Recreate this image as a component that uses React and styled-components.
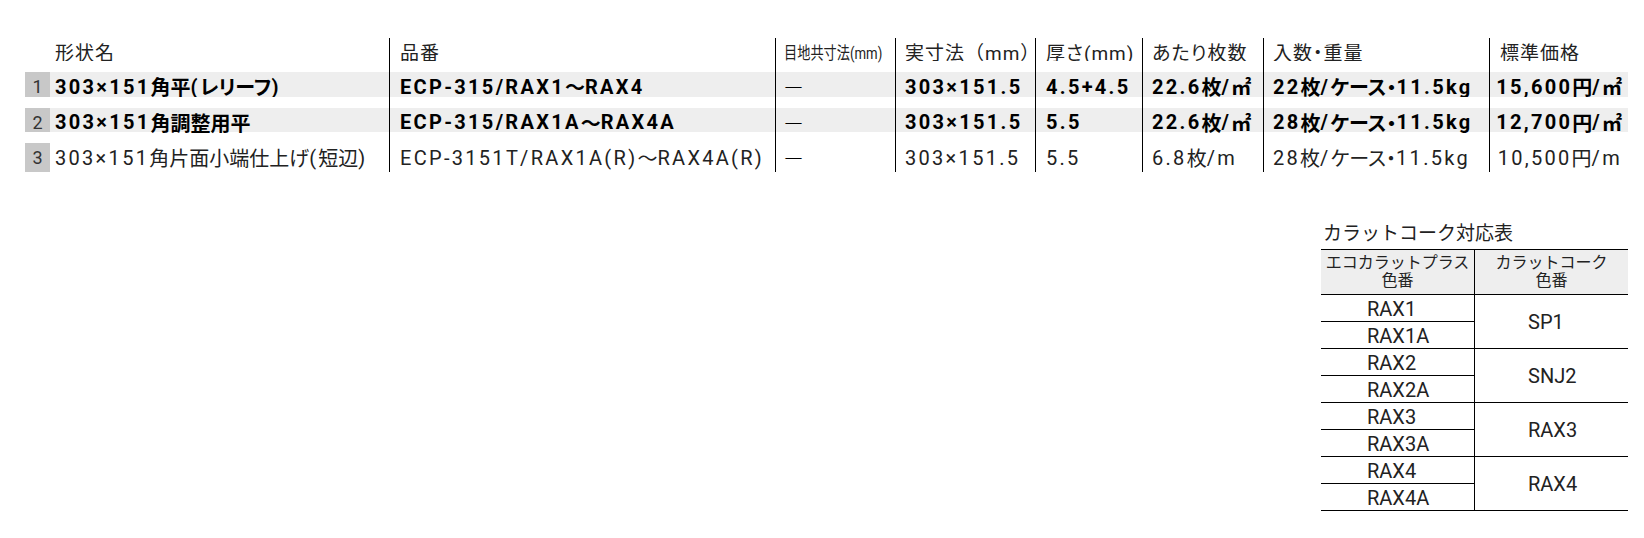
import React from 'react';
import styled, { createGlobalStyle } from 'styled-components';

const GlobalStyle = createGlobalStyle`
    html, body {
        margin: 0;
        padding: 0;
        background: #fff;
    }
    body {
        font-family: Roboto, "Noto Sans CJK JP", sans-serif;
        color: #111;
    }
`;

const COLUMNS = '25px 339px 386px 120px 140px 107px 121px 226px 139px';
const CJK = /([\u2015\u3000-\u30ff\u3300-\u33ff\u3400-\u9fff\uff00-\uffef]+)/;

const headers = [
    { label: '形状名', inset: 5 },
    { label: '品番', inset: 10 },
    { label: '目地共寸法(mm)', inset: 8, narrow: true },
    { label: '実寸法（mm）', inset: 9, full: true },
    { label: '厚さ(mm)', inset: 10 },
    { label: 'あたり枚数', inset: 9 },
    { label: '入数・重量', inset: 9 },
    { label: '標準価格', inset: 10 },
];

const rows = [
    {
        no: 1,
        bold: true,
        shaded: true,
        cells: ['303×151角平(レリーフ)', 'ECP-315/RAX1～RAX4', null, '303×151.5', '4.5+4.5', '22.6枚/㎡', '22枚/ケース・11.5kg', '15,600円/㎡'],
    },
    {
        no: 2,
        bold: true,
        shaded: true,
        cells: ['303×151角調整用平', 'ECP-315/RAX1A～RAX4A', null, '303×151.5', '5.5', '22.6枚/㎡', '28枚/ケース・11.5kg', '12,700円/㎡'],
    },
    {
        no: 3,
        bold: false,
        shaded: false,
        cells: ['303×151角片面小端仕上げ(短辺)', 'ECP-3151T/RAX1A(R)～RAX4A(R)', null, '303×151.5', '5.5', '6.8枚/m', '28枚/ケース・11.5kg', '10,500円/m'],
    },
];

const groups = [
    { codes: ['RAX1', 'RAX1A'], match: 'SP1' },
    { codes: ['RAX2', 'RAX2A'], match: 'SNJ2' },
    { codes: ['RAX3', 'RAX3A'], match: 'RAX3' },
    { codes: ['RAX4', 'RAX4A'], match: 'RAX4' },
];

// latin runs keep the wide tracking, japanese runs are set tight
const Mixed = ({ text }) =>
    text.split(CJK).map((part, i) => (i % 2 ? <Jp key={i}>{part}</Jp> : part));

const App = () => {
    return (
        <Page>
            <GlobalStyle />
            <SpecTable>
                <HeadRow>
                    <Blank />
                    {headers.map((h, i) => (
                        <HeadCell key={h.label} $line={i > 0} $inset={h.inset} $full={h.full}>
                            {h.narrow ? <Narrow>{h.label}</Narrow> : h.label}
                        </HeadCell>
                    ))}
                </HeadRow>
                {rows.map((row) => (
                    <DataRow key={row.no} $shaded={row.shaded} $bold={row.bold}>
                        <Badge>{row.no}</Badge>
                        {row.cells.map((text, i) => (
                            <Cell
                                key={i}
                                $line={i > 0}
                                $inset={headers[i].inset}
                                $right={i === row.cells.length - 1}
                            >
                                {text === null ? <Dash>―</Dash> : <Mixed text={text} />}
                            </Cell>
                        ))}
                    </DataRow>
                ))}
            </SpecTable>

            <MatchBlock>
                <MatchTitle>カラットコーク対応表</MatchTitle>
                <MatchTable>
                    <MatchHead>
                        <MatchHeadCell>
                            エコカラットプラス
                            <br />
                            色番
                        </MatchHeadCell>
                        <MatchHeadCell $line>
                            カラットコーク
                            <br />
                            色番
                        </MatchHeadCell>
                    </MatchHead>
                    {groups.map((g) => (
                        <Group key={g.match}>
                            <CodeColumn>
                                {g.codes.map((c, i) => (
                                    <CodeCell key={c} $split={i === 0}>
                                        {c}
                                    </CodeCell>
                                ))}
                            </CodeColumn>
                            <MatchCell>{g.match}</MatchCell>
                        </Group>
                    ))}
                </MatchTable>
            </MatchBlock>
        </Page>
    );
};

const Page = styled.div`
    width: 1644px;
    height: 538px;
    box-sizing: border-box;
    padding: 38px 16px 0 25px;
    display: flex;
    flex-direction: column;
    align-items: flex-end;
`;

const SpecTable = styled.div`
    width: 1603px;
    display: flex;
    flex-direction: column;
    font-feature-settings: 'palt';
`;

const HeadRow = styled.div`
    display: grid;
    grid-template-columns: ${COLUMNS};
    height: 23px;
`;

const Blank = styled.div``;

const HeadCell = styled.div`
    box-sizing: border-box;
    display: flex;
    align-items: center;
    padding-left: ${(p) => p.$inset}px;
    border-left: ${(p) => (p.$line ? '1px solid #000' : 'none')};
    font-size: 19px;
    letter-spacing: 1px;
    font-feature-settings: ${(p) => (p.$full ? 'normal' : "'palt'")};
    color: #222;
    white-space: nowrap;
`;

const Narrow = styled.span`
    display: inline-block;
    font-size: 16.5px;
    letter-spacing: 0;
    transform: scaleX(0.8);
    transform-origin: left center;
`;

const DataRow = styled.div`
    display: grid;
    grid-template-columns: ${COLUMNS};
    height: 35.5px;
    background: ${(p) => (p.$shaded ? 'linear-gradient(#fff 0 11px, #eee 11px)' : 'transparent')};
    font-weight: ${(p) => (p.$bold ? 700 : 400)};
    color: ${(p) => (p.$bold ? '#000' : '#222')};
`;

const Badge = styled.div`
    box-sizing: border-box;
    padding-top: 11px;
    display: flex;
    align-items: center;
    justify-content: center;
    background: linear-gradient(#fff 0 11px, #c8c8c8 11px);
    font-size: 18px;
    font-weight: 400;
    color: #333;
`;

const Cell = styled.div`
    box-sizing: border-box;
    padding: 11px ${(p) => (p.$right ? 6 : 0)}px 0 ${(p) => p.$inset}px;
    border-left: ${(p) => (p.$line ? '1px solid #000' : 'none')};
    display: flex;
    align-items: center;
    justify-content: ${(p) => (p.$right ? 'flex-end' : 'flex-start')};
    font-size: 20px;
    letter-spacing: 2.3px;
    white-space: nowrap;
`;

const Jp = styled.span`
    letter-spacing: 0;
`;

const Dash = styled.span`
    font-family: 'Noto Sans CJK JP', sans-serif;
    font-weight: 700;
    font-size: 19px;
    letter-spacing: 0;
    color: #000;
`;

const MatchBlock = styled.div`
    margin-top: 55px;
    width: 307px;
`;

const MatchTitle = styled.div`
    font-size: 19px;
    line-height: 22px;
    padding-left: 2px;
    margin-bottom: 4px;
    color: #222;
`;

const MatchTable = styled.div`
    border-top: 1.5px solid #000;
`;

const MatchHead = styled.div`
    display: grid;
    grid-template-columns: 153px 154px;
    height: 45px;
    box-sizing: border-box;
    background: #eee;
    border-bottom: 1.5px solid #000;
`;

const MatchHeadCell = styled.div`
    box-sizing: border-box;
    display: flex;
    align-items: center;
    justify-content: center;
    text-align: center;
    font-size: 16px;
    line-height: 18px;
    color: #222;
    border-left: ${(p) => (p.$line ? '1.5px solid #000' : 'none')};
`;

const Group = styled.div`
    display: grid;
    grid-template-columns: 153px 154px;
    height: 54px;
    box-sizing: border-box;
    border-bottom: 1.5px solid #000;
`;

const CodeColumn = styled.div`
    display: flex;
    flex-direction: column;
`;

const CodeCell = styled.div`
    flex: 1;
    box-sizing: border-box;
    display: flex;
    align-items: center;
    padding: 2px 0 0 46px;
    font-size: 20px;
    color: #222;
    border-bottom: ${(p) => (p.$split ? '1.5px solid #000' : 'none')};
`;

const MatchCell = styled.div`
    box-sizing: border-box;
    display: flex;
    align-items: center;
    padding: 2px 0 0 53px;
    font-size: 20px;
    color: #222;
    border-left: 1.5px solid #000;
`;

export default App;
